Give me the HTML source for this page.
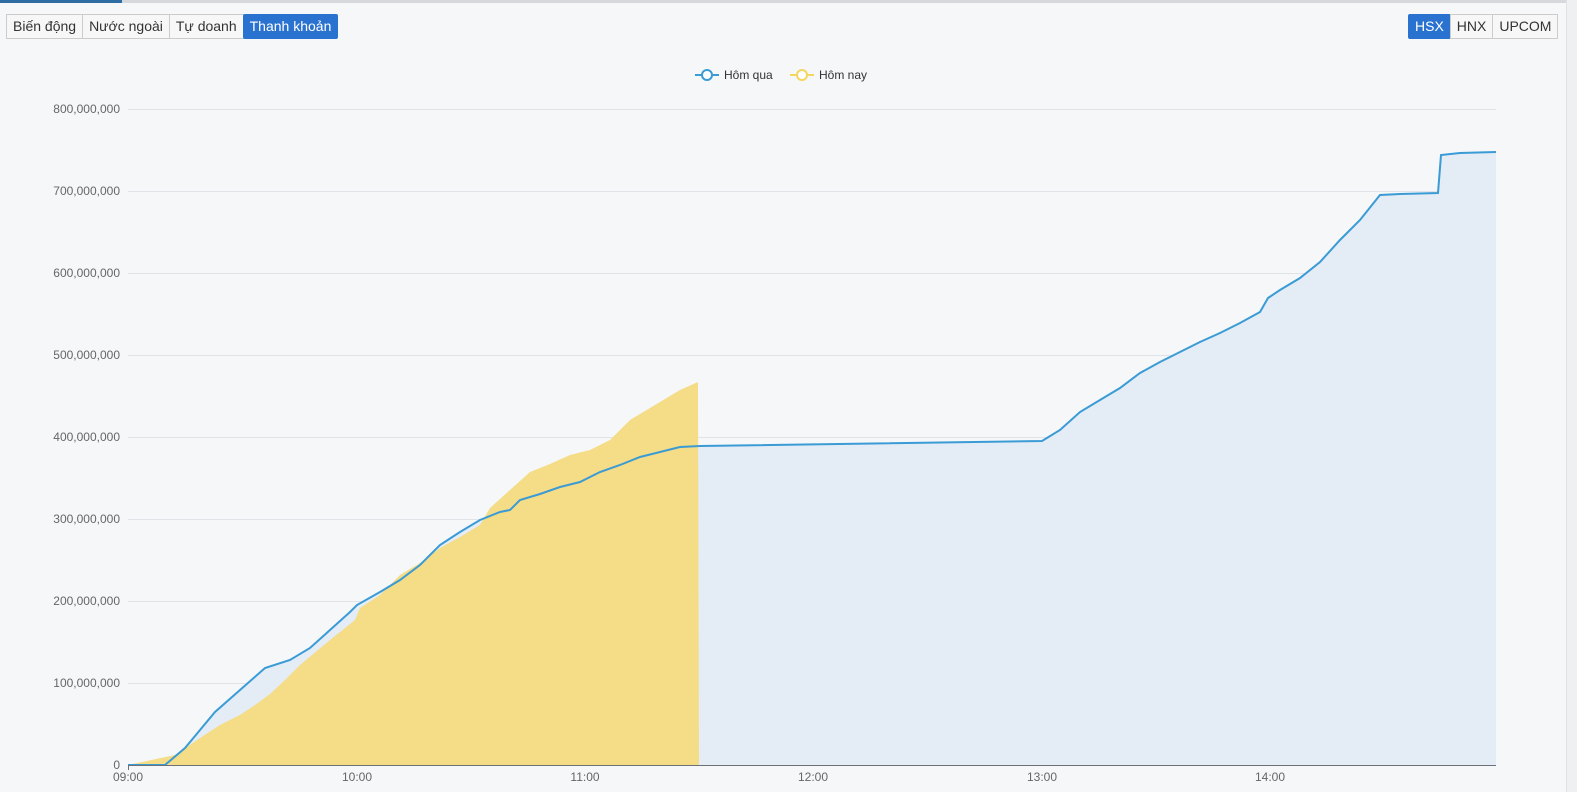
<!DOCTYPE html>
<html><head><meta charset="utf-8"><style>
body{margin:0;width:1577px;height:792px;background:#f5f7f9;font-family:"Liberation Sans",sans-serif;overflow:hidden;position:relative}
.top{position:absolute;top:0;left:0;width:1566px;height:3px;background:#d6d8db}
.top i{position:absolute;left:0;top:0;width:122px;height:3px;background:#2e6da4}
.rb{position:absolute;top:0;left:1566px;width:11px;height:792px;background:#eef0f2;border-left:1px solid #e0e2e5}
.grp{position:absolute;top:14px;display:flex}
.grp span{font-size:14px;color:#333;padding:0 6px;height:23px;line-height:23px;border:1px solid #ccc;margin-left:-1px;background:#f7f7f7}
.grp span.a{background:#2a72d0;color:#fff;border-color:#2a72d0;border-radius:2px}
</style></head><body>
<div class="top"><i></i></div><div class="rb"></div>
<div class="grp" style="left:7px"><span>Biến động</span><span>Nước ngoài</span><span>Tự doanh</span><span class="a">Thanh khoản</span></div>
<div class="grp" style="left:1409px"><span class="a">HSX</span><span>HNX</span><span>UPCOM</span></div>
<svg width="1577" height="792" style="position:absolute;left:0;top:0" font-family="Liberation Sans" font-size="12" fill="#666">
<g stroke="#e0e3e8" stroke-width="1">
<line x1="128" x2="1496" y1="109.5" y2="109.5"/><line x1="128" x2="1496" y1="191.5" y2="191.5"/><line x1="128" x2="1496" y1="273.5" y2="273.5"/><line x1="128" x2="1496" y1="355.5" y2="355.5"/><line x1="128" x2="1496" y1="437.5" y2="437.5"/><line x1="128" x2="1496" y1="519.5" y2="519.5"/><line x1="128" x2="1496" y1="601.5" y2="601.5"/><line x1="128" x2="1496" y1="683.5" y2="683.5"/>
</g>
<g text-anchor="end">
<text x="120" y="113">800,000,000</text><text x="120" y="195">700,000,000</text><text x="120" y="277">600,000,000</text><text x="120" y="359">500,000,000</text><text x="120" y="441">400,000,000</text><text x="120" y="523">300,000,000</text><text x="120" y="605">200,000,000</text><text x="120" y="687">100,000,000</text><text x="120" y="769">0</text>
</g>
<polygon fill="#e4ecf6" points="128,765 165,765 185,748 200,730 215,712 240,690 265,668 290,660 310,648 330,630 350,612 357,605 380,592 400,580 420,565 440,545 460,532 480,520 500,512 510,510 520,500 540,494 560,487 580,482 600,472 620,465 640,457 660,452 680,447 700,446 1042,441 1060,430 1080,412 1100,400 1120,388 1140,373 1160,362 1180,352 1200,342 1220,333 1240,323 1260,312 1268,298 1280,290 1300,278 1320,262 1340,240 1360,220 1380,195 1400,194 1438,193 1441,155 1460,153 1496,152 1496,765"/>
<polygon fill="#f5dc86" points="128,765 175,755 200,738 220,725 240,715 255,705 270,694 285,680 300,665 330,640 355,620 360,608 380,595 400,575 420,563 440,548 460,537 480,525 490,508 510,490 530,472 550,464 570,455 590,450 610,440 630,420 660,402 680,390 698,382 699,765"/>
<polyline fill="none" stroke="#3a9bd5" stroke-width="2" points="128,765 165,765 185,748 200,730 215,712 240,690 265,668 290,660 310,648 330,630 350,612 357,605 380,592 400,580 420,565 440,545 460,532 480,520 500,512 510,510 520,500 540,494 560,487 580,482 600,472 620,465 640,457 660,452 680,447 700,446 1042,441 1060,430 1080,412 1100,400 1120,388 1140,373 1160,362 1180,352 1200,342 1220,333 1240,323 1260,312 1268,298 1280,290 1300,278 1320,262 1340,240 1360,220 1380,195 1400,194 1438,193 1441,155 1460,153 1496,152"/>
<line x1="128" x2="1496" y1="765.5" y2="765.5" stroke="#6e7079"/>
<g stroke="#6e7079"><line x1="128.5" x2="128.5" y1="765" y2="770"/></g>
<g text-anchor="middle"><text x="128" y="781">09:00</text><text x="357" y="781">10:00</text><text x="585" y="781">11:00</text><text x="813" y="781">12:00</text><text x="1042" y="781">13:00</text><text x="1270" y="781">14:00</text></g>
<line x1="695" x2="719" y1="75" y2="75" stroke="#3a9bd5" stroke-width="2"/><circle cx="707" cy="75" r="5" fill="#fff" stroke="#3a9bd5" stroke-width="2"/>
<text x="724" y="79" fill="#333">Hôm qua</text>
<line x1="790" x2="814" y1="75" y2="75" stroke="#f5d65e" stroke-width="2"/><circle cx="802" cy="75" r="5" fill="#fff" stroke="#f5d65e" stroke-width="2"/>
<text x="819" y="79" fill="#333">Hôm nay</text>
</svg>
</body></html>
